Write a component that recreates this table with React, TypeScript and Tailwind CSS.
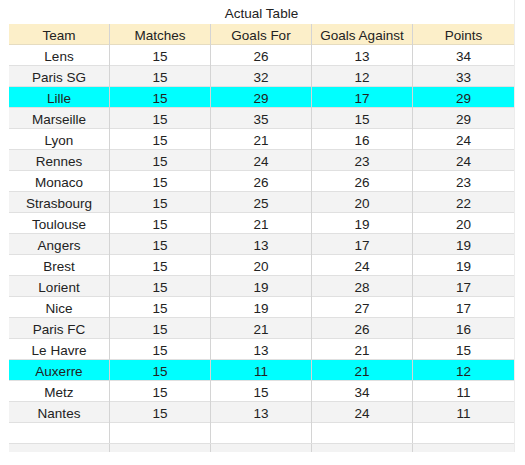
const rows: [string, number, number, number, number][] = [
  ['Lens', 15, 26, 13, 34],
  ['Paris SG', 15, 32, 12, 33],
  ['Lille', 15, 29, 17, 29],
  ['Marseille', 15, 35, 15, 29],
  ['Lyon', 15, 21, 16, 24],
  ['Rennes', 15, 24, 23, 24],
  ['Monaco', 15, 26, 26, 23],
  ['Strasbourg', 15, 25, 20, 22],
  ['Toulouse', 15, 21, 19, 20],
  ['Angers', 15, 13, 17, 19],
  ['Brest', 15, 20, 24, 19],
  ['Lorient', 15, 19, 28, 17],
  ['Nice', 15, 19, 27, 17],
  ['Paris FC', 15, 21, 26, 16],
  ['Le Havre', 15, 13, 21, 15],
  ['Auxerre', 15, 11, 21, 12],
  ['Metz', 15, 15, 34, 11],
  ['Nantes', 15, 13, 24, 11],
]

const headers = ['Team', 'Matches', 'Goals For', 'Goals Against', 'Points']
const highlighted = ['Lille', 'Auxerre']

function Cell({ children, last }: { children?: React.ReactNode; last?: boolean }) {
  return (
    <div
      className={
        'flex items-center justify-center pt-[2px] ' + (last ? '' : 'border-r border-[#d4d4d4]')
      }
    >
      {children}
    </div>
  )
}

export default function App() {
  return (
    <div
      className="w-[525px] h-[465px] bg-white text-[13.5px] text-[#222]"
      style={{ fontFamily: '"Liberation Sans", Arial, sans-serif' }}
    >
      <div className="ml-[9px] w-[506px] pt-[3px] border-r border-[#ececec]">
        <div className="h-[21px] pt-[2px] flex items-center justify-center">Actual Table</div>

        <div className="grid grid-cols-[101px_101px_101px_101px_101px] h-[21px] bg-[#fcefc9] border-b border-[#e6dcc0]">
          {headers.map((h, i) => (
            <Cell key={h} last={i === headers.length - 1}>
              {h}
            </Cell>
          ))}
        </div>

        {rows.map((r, idx) => {
          const bg = highlighted.includes(r[0])
            ? 'bg-[#00ffff]'
            : idx % 2 === 1
              ? 'bg-[#f3f3f3]'
              : 'bg-white'
          return (
            <div
              key={r[0]}
              className={
                'grid grid-cols-[101px_101px_101px_101px_101px] h-[21px] border-b border-[#e0e0e0] ' + bg
              }
            >
              {r.map((v, i) => (
                <Cell key={i} last={i === r.length - 1}>
                  {v}
                </Cell>
              ))}
            </div>
          )
        })}

        {/* empty rows at the bottom */}
        <div className="grid grid-cols-[101px_101px_101px_101px_101px] h-[21px] border-b border-[#e0e0e0] bg-white">
          {headers.map((h, i) => (
            <Cell key={h} last={i === headers.length - 1} />
          ))}
        </div>
        <div className="grid grid-cols-[101px_101px_101px_101px_101px] h-[8px] bg-[#f3f3f3]">
          {headers.map((h, i) => (
            <Cell key={h} last={i === headers.length - 1} />
          ))}
        </div>
      </div>
    </div>
  )
}
